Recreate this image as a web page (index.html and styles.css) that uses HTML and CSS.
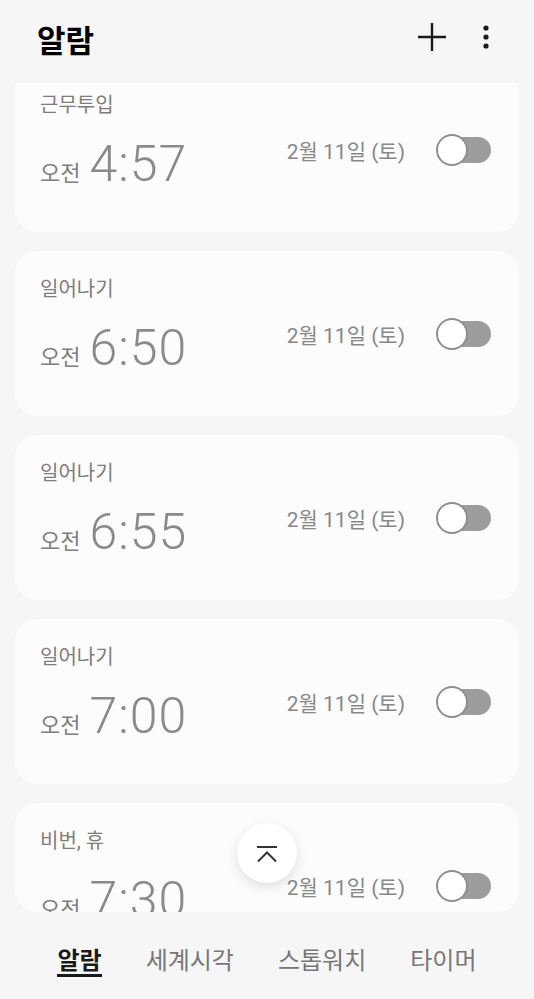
FILE: index.html
```html
<!DOCTYPE html>
<html lang="ko">
<head>
    <meta charset="UTF-8">
    <meta name="viewport" content="width=device-width, initial-scale=1.0">
    <title>알람</title>
    <link rel="stylesheet" href="styles.css">
</head>
<body>
    <div class="app">
        <header class="topbar">
            <h1>알람</h1>
            <div class="actions">
                <svg class="icon-plus" width="28" height="28" viewBox="0 0 28 28">
                    <path d="M14 0v28M0 14h28" stroke="#1a1a1a" stroke-width="2.4" fill="none"/>
                </svg>
                <svg class="icon-more" width="12" height="28" viewBox="0 0 12 28">
                    <circle cx="6" cy="5" r="2.6" fill="#1a1a1a"/>
                    <circle cx="6" cy="14" r="2.6" fill="#1a1a1a"/>
                    <circle cx="6" cy="23" r="2.6" fill="#1a1a1a"/>
                </svg>
            </div>
        </header>

        <main class="list-view">
            <div class="list">
                <div class="card">
                    <div class="label">근무투입</div>
                    <div class="row">
                        <div class="clock"><span class="ampm">오전</span><span class="time">4:57</span></div>
                        <div class="side"><span class="date">2월 11일 (토)</span><span class="toggle"></span></div>
                    </div>
                </div>
                <div class="card">
                    <div class="label">일어나기</div>
                    <div class="row">
                        <div class="clock"><span class="ampm">오전</span><span class="time">6:50</span></div>
                        <div class="side"><span class="date">2월 11일 (토)</span><span class="toggle"></span></div>
                    </div>
                </div>
                <div class="card">
                    <div class="label">일어나기</div>
                    <div class="row">
                        <div class="clock"><span class="ampm">오전</span><span class="time">6:55</span></div>
                        <div class="side"><span class="date">2월 11일 (토)</span><span class="toggle"></span></div>
                    </div>
                </div>
                <div class="card">
                    <div class="label">일어나기</div>
                    <div class="row">
                        <div class="clock"><span class="ampm">오전</span><span class="time">7:00</span></div>
                        <div class="side"><span class="date">2월 11일 (토)</span><span class="toggle"></span></div>
                    </div>
                </div>
                <div class="card">
                    <div class="label">비번, 휴</div>
                    <div class="row">
                        <div class="clock"><span class="ampm">오전</span><span class="time">7:30</span></div>
                        <div class="side"><span class="date">2월 11일 (토)</span><span class="toggle"></span></div>
                    </div>
                </div>
            </div>
        </main>

        <button class="to-top">
            <svg width="22" height="20" viewBox="0 0 22 20">
                <path d="M1 4h20M2 18.5l9-9 9 9" stroke="#333" stroke-width="2" fill="none"/>
            </svg>
        </button>

        <nav class="tabs">
            <span class="tab active">알람</span>
            <span class="tab">세계시각</span>
            <span class="tab">스톱워치</span>
            <span class="tab">타이머</span>
        </nav>
    </div>
</body>
</html>
```

FILE: styles.css
```css
body {
    margin: 0;
    background: #f6f6f6;
    font-family: Roboto, "Noto Sans CJK KR", sans-serif;
}

.app {
    position: relative;
    width: 534px;
    height: 999px;
    display: flex;
    flex-direction: column;
    overflow: hidden;
}

.topbar {
    height: 78px;
    padding: 0 42px 5px 37px;
    display: flex;
    align-items: center;
    justify-content: space-between;
}

.topbar h1 {
    margin: 0;
    font-family: "Noto Sans CJK KR", sans-serif;
    font-size: 31px;
    font-weight: 700;
    line-height: 40px;
    color: #000;
}

.actions {
    display: flex;
    align-items: center;
    gap: 34px;
    margin-bottom: 5px;
}

.actions svg {
    display: block;
}

.list-view {
    height: 829px;
    margin: 0 15px;
    overflow: hidden;
    border-radius: 0 0 22px 22px;
}

.list {
    margin-top: -16px;
    display: flex;
    flex-direction: column;
    gap: 19px;
}

.card {
    height: 165px;
    flex-shrink: 0;
    box-sizing: border-box;
    padding: 26px 28px 0 25px;
    background: #fcfcfc;
    border-radius: 22px;
}

.label {
    font-size: 20px;
    line-height: 24px;
    color: #7d7d7d;
}

.row {
    margin-top: 19px;
    display: flex;
    justify-content: space-between;
    align-items: flex-start;
}

.clock {
    display: flex;
    align-items: baseline;
    gap: 9px;
}

.ampm {
    font-size: 22px;
    color: #7f7f7f;
}

.time {
    font-size: 50px;
    line-height: 56px;
    font-weight: 300;
    letter-spacing: 1px;
    color: #8a8a8a;
}

.side {
    display: flex;
    align-items: center;
    gap: 31px;
    height: 32px;
    margin-top: -2px;
}

.date {
    font-size: 21px;
    color: #888;
}

.toggle {
    position: relative;
    width: 55px;
    height: 32px;
}

.toggle::before {
    content: "";
    position: absolute;
    left: 4px;
    right: 0;
    top: 3px;
    bottom: 3px;
    border-radius: 13px;
    background: #9c9c9c;
}

.toggle::after {
    content: "";
    position: absolute;
    left: 0;
    top: 0;
    width: 32px;
    height: 32px;
    box-sizing: border-box;
    border: 2px solid #8f8f8f;
    border-radius: 50%;
    background: #fff;
}

.to-top {
    position: absolute;
    left: 237px;
    top: 823px;
    width: 60px;
    height: 60px;
    padding: 0;
    border: none;
    border-radius: 50%;
    background: #fff;
    box-shadow: 0 4px 12px rgba(0, 0, 0, 0.12);
    display: flex;
    align-items: center;
    justify-content: center;
}

.to-top svg {
    display: block;
}

.tabs {
    flex: 1;
    padding-top: 31px;
    display: flex;
    justify-content: center;
    align-items: flex-start;
    gap: 44px;
}

.tab {
    font-family: "Noto Sans CJK KR", sans-serif;
    font-size: 24px;
    line-height: 31px;
    color: #777;
}

.tab.active {
    color: #1a1a1a;
    font-weight: 700;
    padding-bottom: 0;
    border-bottom: 3px solid #1a1a1a;
}
```
